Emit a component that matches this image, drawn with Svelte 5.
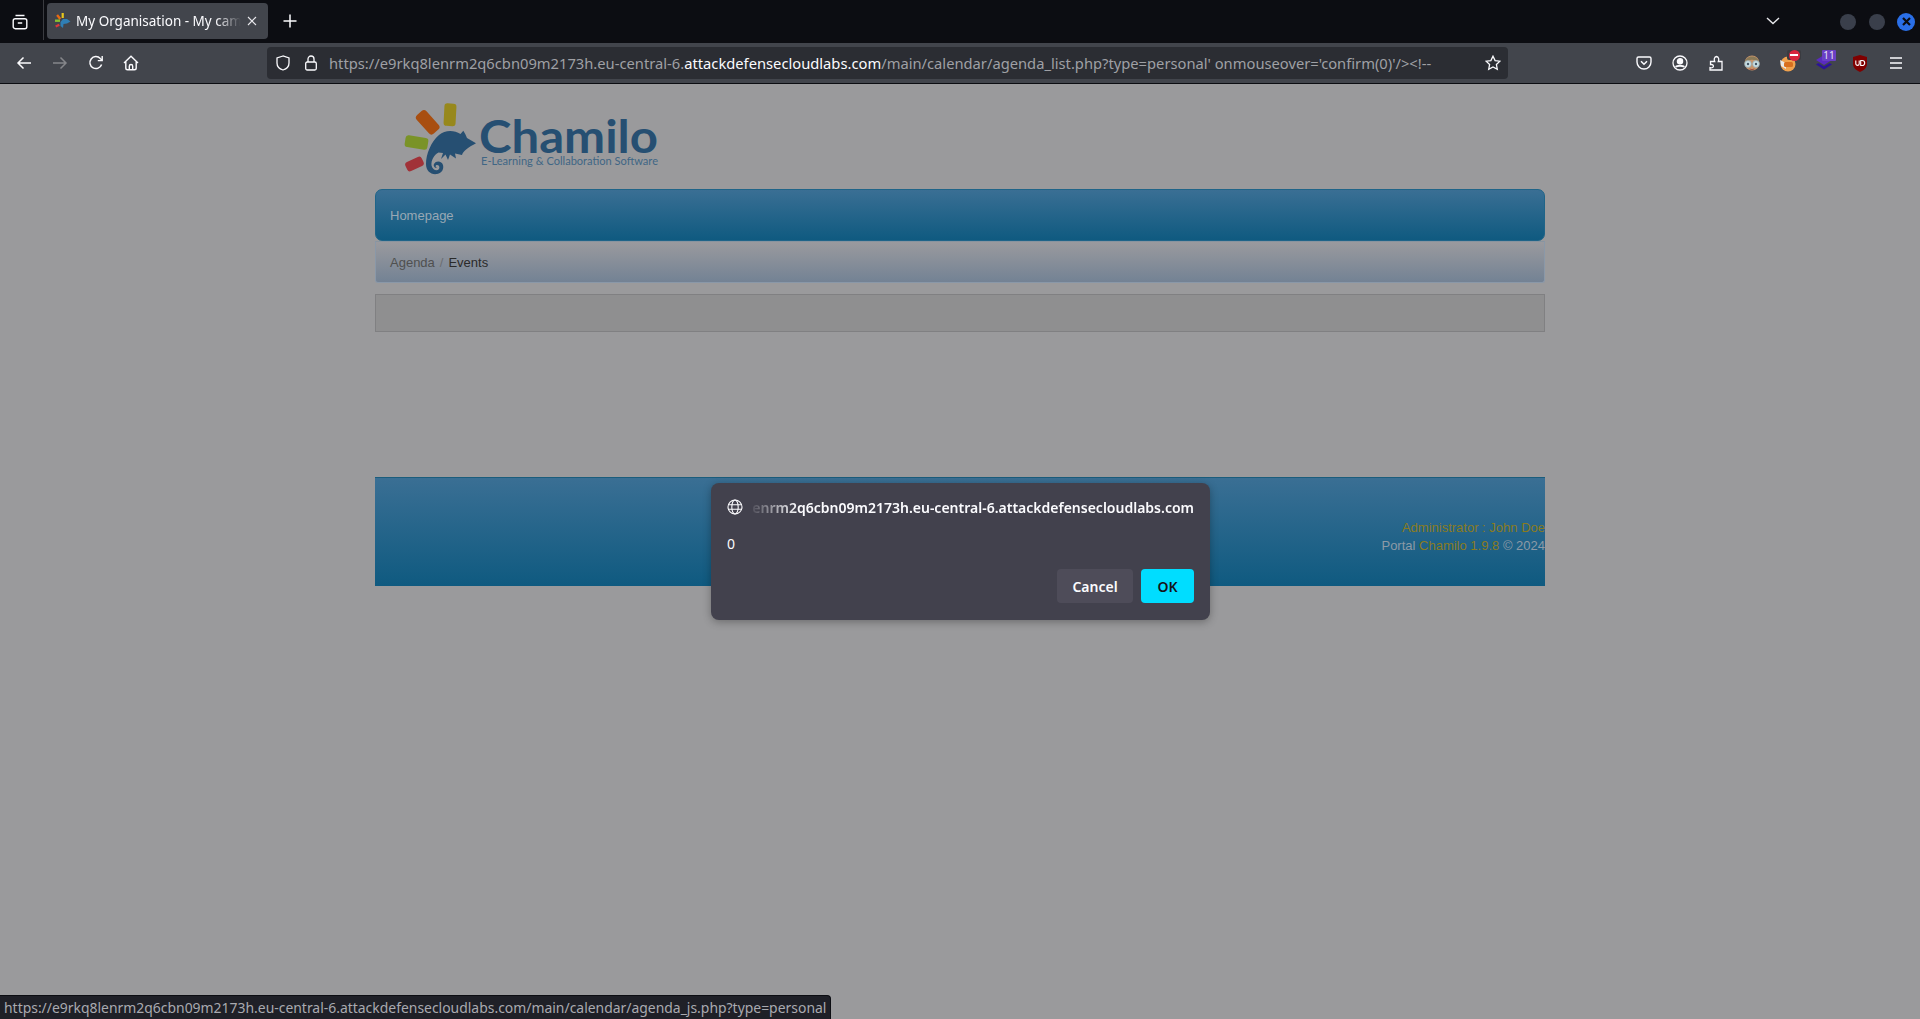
<script>
  const url1 = "https://e9rkq8lenrm2q6cbn09m2173h.eu-central-6.";
  const url2 = "attackdefensecloudlabs.com";
  const url3 = "/main/calendar/agenda_list.php?type=personal' onmouseover='confirm(0)'/><!--";
</script>

<div class="window">
  <header class="tabstrip">
    <div class="tabs-btn">
      <svg width="16" height="16" viewBox="0 0 16 16" fill="none" stroke="#fbfbfe" stroke-width="1.4"><rect x="1.2" y="4.7" width="13.6" height="10" rx="2"/><path d="M3.5 1.5h9M5.8 9h4.4"/></svg>
    </div>
    <div class="divider"></div>
    <div class="tab">
      <svg class="favicon" width="16" height="16" viewBox="0 0 16 16"><rect x="6.6" y="0" width="2.2" height="5" fill="#e8c81c"/><rect x="2.5" y="1.5" width="2.4" height="5" transform="rotate(-40 3.7 4)" fill="#ea6a10"/><rect x="0" y="6.5" width="5" height="2.4" fill="#88c030"/><rect x="0.5" y="11.5" width="4" height="2.2" transform="rotate(-25 2.5 12.6)" fill="#dd3a3a"/><path d="M15.5 8.5 12 6 8 6 5.5 9 5.5 13 8 15 8.5 11 12 10.5z" fill="#2f7fb5"/></svg>
      <span class="tab-title">My Organisation - My campus</span>
      <svg class="tab-close" width="10" height="10" viewBox="0 0 10 10" stroke="#e8e8ec" stroke-width="1.1"><path d="M1 1l8 8M9 1l-8 8"/></svg>
    </div>
    <svg class="plus" width="14" height="14" viewBox="0 0 14 14" stroke="#fbfbfe" stroke-width="1.5"><path d="M7 .5v13M.5 7h13"/></svg>
    <div class="strip-space"></div>
    <svg class="chev" width="14" height="8" viewBox="0 0 14 8" fill="none" stroke="#e8e8ec" stroke-width="1.4"><path d="M1 1l6 5.5L13 1"/></svg>
    <div class="wbtns">
      <span class="wbtn"></span>
      <span class="wbtn"></span>
      <span class="wbtn close"><svg width="9" height="9" viewBox="0 0 9 9" stroke="#0c0d12" stroke-width="2.2"><path d="M1 1l7 7M8 1l-7 7"/></svg></span>
    </div>
  </header>

  <nav class="toolbar">
    <div class="tb-group">
      <span class="tb"><svg width="16" height="16" viewBox="0 0 16 16" fill="none" stroke="#fbfbfe" stroke-width="1.5"><path d="M15 8H2M7.5 2.5 2 8l5.5 5.5"/></svg></span>
      <span class="tb"><svg width="16" height="16" viewBox="0 0 16 16" fill="none" stroke="#85868a" stroke-width="1.5"><path d="M1 8h13M8.5 2.5 14 8l-5.5 5.5"/></svg></span>
      <span class="tb"><svg width="16" height="16" viewBox="0 0 16 16" fill="none" stroke="#fbfbfe" stroke-width="1.5"><path d="M13.6 9.5A6 6 0 1 1 12.3 3.5L14 5.2"/><path d="M14.2 1v4.6H9.8" stroke-width="1.4"/></svg></span>
      <span class="tb home"><svg width="16" height="16" viewBox="0 0 16 16" fill="none" stroke="#fbfbfe" stroke-width="1.4"><path d="M1 8 8 1.2 15 8M2.8 6.5V13a1.8 1.8 0 0 0 1.8 1.8h6.8a1.8 1.8 0 0 0 1.8-1.8V6.5"/><path d="M6.3 14.8v-3.6a1.7 1.7 0 0 1 3.4 0v3.6"/></svg></span>
    </div>
    <div class="urlbar">
      <svg class="shield" width="16" height="16" viewBox="0 0 16 16" fill="none" stroke="#fbfbfe" stroke-width="1.3"><path d="M8 1 2 3v5c0 3.4 2.6 6 6 7 3.4-1 6-3.600 6-7V3z"/></svg>
      <svg class="lock" width="14" height="16" viewBox="0 0 14 16" fill="none" stroke="#fbfbfe" stroke-width="1.3"><rect x="1.700" y="7" width="10.600" height="8" rx="1.500"/><path d="M4 7V4a3 3 0 0 1 6 0v3"/></svg>
      <span class="url"><span class="dim">{url1}</span><span class="bright">{url2}</span><span class="dim">{url3}</span></span>
      <svg class="star" width="16" height="16" viewBox="0 0 16 16" fill="none" stroke="#fbfbfe" stroke-width="1.300"><path d="M8 1.200l2.100 4.400 4.800.6-3.500 3.300.9 4.800L8 12l-4.300 2.300.9-4.800L1.100 6.200l4.800-.6z"/></svg>
    </div>
    <div class="tb-group right">
      <span class="tb"><svg width="16" height="16" viewBox="0 0 16 16" fill="none" stroke="#fbfbfe" stroke-width="1.400"><path d="M2.500 2h11A1.500 1.500 0 0 1 15 3.500V7a7 7 0 0 1-14 0V3.500A1.500 1.500 0 0 1 2.500 2z"/><path d="M5 6.300 8 9.200l3-2.900" stroke-width="1.500"/></svg></span>
      <span class="tb"><svg width="16" height="16" viewBox="0 0 16 16" fill="none" stroke="#fbfbfe" stroke-width="1.300"><circle cx="8" cy="8" r="7"/><circle cx="8" cy="6.300" r="2.600" fill="#fbfbfe"/><path d="M3.800 12c1-1.700 7.400-1.700 8.400 0" stroke-width="1.800"/></svg></span>
      <span class="tb"><svg width="16" height="16" viewBox="0 0 16 16" fill="none" stroke="#fbfbfe" stroke-width="1.300"><path d="M2 15h12V6.500h-3.700c.9-2 .5-4.800-1.800-5-2.300.2-2.700 3-1.800 5H2.500v3.200c2-.6 2.900.5 2.900 1.500s-1 2-3.400 1.400z"/></svg></span>
      <span class="tb"><svg width="18" height="18" viewBox="0 0 18 18"><circle cx="9" cy="9" r="7.500" fill="#c8946a"/><path d="M2 8C3 .5 15 .5 16 8 13 5 5 5 2 8z" fill="#8a7a58"/><circle cx="5" cy="10" r="3.400" fill="#c8dfe4" stroke="#8fa0a8" stroke-width=".7"/><circle cx="13" cy="10" r="3.400" fill="#c8dfe4" stroke="#8fa0a8" stroke-width=".7"/><circle cx="5" cy="10" r="1.200" fill="#456"/><circle cx="13" cy="10" r="1.200" fill="#456"/><path d="M6.500 15q2.500 1.200 5 0" stroke="#a04f3f" fill="none"/></svg></span>
      <span class="tb">
        <svg width="18" height="18" viewBox="0 0 18 18"><circle cx="9" cy="10" r="7.500" fill="#f0a24e"/><path d="M1 6l6 3v6l-5-3z" fill="#e8e8e8"/><rect x="5" y="8" width="9" height="5" rx="1.500" fill="#d9701f"/></svg>
        <span class="block-badge"><span class="block-dot"><span class="block-bar"></span></span></span>
      </span>
      <span class="tb">
        <svg width="18" height="16" viewBox="0 0 18 16"><path d="M9 0l8 5-8 5-8-5z" fill="#5a2bc0"/><path d="M1 9.500 9 14.500l8-5-2.400-1.500L9 11.500 3.400 8z" fill="#2b139a"/></svg>
        <span class="count">11</span>
      </span>
      <span class="tb"><svg width="16" height="17" viewBox="0 0 16 17"><path d="M8 0 1 2v7c0 3.600 3 6.300 7 8 4-1.700 7-4.400 7-8V2z" fill="#800000"/><path d="M3.800 5.500v3.200a1.700 1.700 0 0 0 3.400 0V5.500M8.700 5.500v5h1.500a2.500 2.500 0 0 0 0-5z" fill="none" stroke="#fff" stroke-width="1.100"/></svg></span>
      <span class="tb"><svg width="14" height="12" viewBox="0 0 14 12" stroke="#fbfbfe" stroke-width="1.500"><path d="M1 1h12M1 6h12M1 11h12" /></svg></span>
    </div>
  </nav>

  <main class="page">
    <div class="container">
      <div class="logo">
        <svg width="270" height="80" viewBox="0 0 270 80">
          <rect x="21.200" y="9.800" width="13" height="25" rx="3.500" transform="rotate(-42 27.700 22.300)" fill="#a84e10"/>
          <rect x="44" y="3.500" width="12" height="22.500" rx="3" transform="rotate(3 50 15)" fill="#97881c"/>
          <rect x="5" y="36.500" width="23" height="12" rx="3" transform="rotate(9 16.500 42.500)" fill="#7a9327"/>
          <rect x="5.500" y="59" width="18" height="10" rx="3" transform="rotate(-25 14.500 64)" fill="#a13238"/>
          <path d="M76 43.300 67 38Q65 33 63.300 30.700L60.500 34C54 30 45 30 39 35 31 42 26 54 26 64 26 71 31 75 37 74 42 73 44 69 43 65 42 61 36 60 34 64 33 66 35 68.500 37 67.500 35 67 35.500 65 37 65 39 65 40 67 39 69 37 71.500 32.500 70 31.500 65.500 31 60 34 55 38.500 52.500L43 53 41 59 45.500 54.500 48 60 50 54.500 56 58.500 55 53.500 62 55C63 51 69 47 76 43.300z" fill="#264f72"/>
          <text x="79" y="52.500" class="logo-name" textLength="179" lengthAdjust="spacingAndGlyphs">Chamilo</text>
          <text x="81" y="64.500" class="logo-sub" textLength="177" lengthAdjust="spacingAndGlyphs">E-Learning &amp; Collaboration Software</text>
        </svg>
      </div>
      <div class="mainnav"><span>Homepage</span></div>
      <div class="crumbs"><span class="c-link">Agenda</span><span class="c-sep">/</span><span class="c-cur">Events</span></div>
      <div class="emptybox"></div>
      <footer class="foot">
        <div class="foot-text">
          <div class="olive">Administrator : John Doe</div>
          <div>Portal <span class="olive">Chamilo 1.9.8</span> © 2024</div>
        </div>
      </footer>
    </div>
  </main>

  <div class="dialog">
    <div class="d-head">
      <svg width="16" height="16" viewBox="0 0 16 16" fill="none" stroke="#fbfbfe" stroke-width="1.100"><circle cx="8" cy="8" r="7"/><ellipse cx="8" cy="8" rx="3.200" ry="7"/><path d="M1.300 5.700h13.400M1.300 10.300h13.400"/></svg>
      <div class="d-host"><span>enrm2q6cbn09m2173h.eu-central-6.attackdefensecloudlabs.com</span></div>
    </div>
    <div class="d-msg">0</div>
    <div class="d-btns">
      <span class="btn cancel">Cancel</span>
      <span class="btn ok">OK</span>
    </div>
  </div>

  <div class="status">https://e9rkq8lenrm2q6cbn09m2173h.eu-central-6.attackdefensecloudlabs.com/main/calendar/agenda_js.php?type=personal</div>
</div>

<style>
  :global(body) { margin: 0; background: #9a9a9c; }
  .window { position: relative; width: 1920px; height: 1019px; overflow: hidden; display: flex; flex-direction: column; font-family: "Noto Sans", sans-serif; }

  .tabstrip { height: 43px; background: #0c0d12; display: flex; align-items: center; flex: none; }
  .tabs-btn { width: 43px; height: 43px; display: flex; align-items: center; justify-content: center; box-sizing: border-box; padding-right: 4px; }
  .divider { width: 1px; height: 40px; margin-top: -3px; background: #3a3b40; }
  .tab { width: 221px; height: 36px; margin-left: 3px; margin-top: -2px; background: #42454c; border-radius: 4px; display: flex; align-items: center; position: relative; box-sizing: border-box; padding-left: 8px; }
  .favicon { flex: none; }
  .tab-title { margin-left: 5px; width: 165px; overflow: hidden; white-space: nowrap; font-size: 13.500px; color: #fbfbfe; -webkit-mask-image: linear-gradient(to right, #000 85%, transparent 100%); mask-image: linear-gradient(to right, #000 85%, transparent 100%); }
  .tab-close { margin-left: 6px; flex: none; }
  .plus { margin-left: 15px; margin-top: -1px; }
  .strip-space { flex: 1; }
  .chev { margin-right: 60px; margin-top: -2px; }
  .wbtns { display: flex; gap: 13px; margin-right: 6px; }
  .wbtn { width: 16px; height: 16px; border-radius: 50%; background: #3a3f4b; display: flex; align-items: center; justify-content: center; }
  .wbtn.close { background: #2a6fe8; width: 18px; height: 18px; margin: -1px -1px -1px -1px; }

  .toolbar { height: 40px; background: #42454c; border-bottom: 1px solid #0c0d12; display: flex; align-items: center; padding: 0 6px; flex: none; }
  .tb-group { display: flex; }
  .tb { width: 36px; height: 36px; display: flex; align-items: center; justify-content: center; position: relative; }
  .home { margin-left: -1px; margin-right: 1px; }
  .urlbar { width: 1241px; height: 32px; margin-left: 117px; margin-right: 118px; background: #2b2d33; border-radius: 4px; display: flex; align-items: center; box-sizing: border-box; padding-left: 8px; padding-right: 7px; flex: none; }
  .shield { flex: none; }
  .lock { flex: none; margin-left: 13px; }
  .url { margin-left: 11px; font-size: 14.730px; white-space: nowrap; overflow: hidden; flex: 1; }
  .dim { color: #9fa0a5; }
  .bright { color: #fbfbfe; }
  .star { flex: none; }
  .block-badge { position: absolute; top: 5px; left: 17px; width: 14px; height: 10px; background: #3a3b40; border-radius: 2px; display: flex; align-items: center; justify-content: center; }
  .block-dot { width: 11px; height: 11px; border-radius: 50%; background: #d7263d; display: flex; align-items: center; justify-content: center; flex: none; }
  .block-bar { width: 8px; height: 2.500px; background: #fff; }
  .count { position: absolute; top: 5px; left: 16px; height: 11px; width: 14px; background: #6a3fc4; border-radius: 1px; color: #e8e4f4; font-size: 10px; line-height: 11px; text-align: center; }

  .page { flex: 1; background: #9a9a9c; font-family: "Liberation Sans", sans-serif; }
  .container { width: 1170px; margin: 0 auto; }
  .logo { height: 105px; box-sizing: border-box; padding: 16px 0 0 25px; }
  .logo svg { display: block; }
  .logo-name { font-family: "Lato", sans-serif; font-size: 46px; font-weight: 700; fill: #264f72; }
  .logo-sub { font-family: "Lato", sans-serif; font-size: 11.500px; fill: #3f6685; }
  .mainnav { height: 52px; box-sizing: border-box; border: 1px solid #1f6488; border-radius: 7px; background: linear-gradient(#3a6f94, #0f5a80); display: flex; align-items: center; padding-left: 14px; font-size: 13px; color: #98a8b4; }
  .crumbs { height: 42px; box-sizing: border-box; border: 1px solid #8a98a8; border-top: 1px solid #88949f; border-radius: 0 0 3px 3px; background: linear-gradient(#9a9a9e, #738294); display: flex; align-items: center; padding-left: 14px; font-size: 13px; }
  .c-link { color: #4f5050; }
  .c-sep { color: #6c6e72; margin: 0 5px; }
  .c-cur { color: #2a2a2a; }
  .emptybox { height: 38px; margin-top: 11px; box-sizing: border-box; border: 1px solid #808082; background: #8f8f90; }
  .foot { height: 109px; margin-top: 145px; border-top: 1px solid #1b5d7c; box-sizing: border-box; background: linear-gradient(#3a6f94, #0f5a80); display: flex; justify-content: flex-end; font-size: 13px; color: #8c9aa6; }
  .foot-text { margin-top: 41px; line-height: 18px; text-align: right; }
  .olive { color: #8a7b1f; }

  .dialog { position: absolute; left: 711px; top: 483px; width: 499px; height: 137px; box-sizing: border-box; padding: 16px; background: #42414d; border-radius: 8px; box-shadow: 0 2px 8px rgba(0,0,0,.3); display: flex; flex-direction: column; color: #fbfbfe; }
  .d-head { display: flex; align-items: center; height: 16px; }
  .d-host { margin-left: 5px; flex: 1; min-width: 0; display: flex; justify-content: flex-end; overflow: hidden; white-space: nowrap; font-size: 14px; font-weight: 600; -webkit-mask-image: linear-gradient(to right, transparent 0, #000 50px); mask-image: linear-gradient(to right, transparent 0, #000 50px); }
  .d-msg { margin-top: 19px; font-size: 14px; line-height: 20px; }
  .d-btns { margin-top: 15px; display: flex; justify-content: flex-end; gap: 8px; }
  .btn { height: 34px; border-radius: 4px; display: flex; align-items: center; justify-content: center; font-size: 14px; font-weight: 600; }
  .cancel { width: 76px; background: #4e4c59; color: #fbfbfe; }
  .ok { width: 53px; background: #00ddff; color: #15141a; }

  .status { position: absolute; left: 0; bottom: 0; width: 831px; height: 24px; box-sizing: border-box; background: #1f2027; border: 1px solid #0c0d12; border-width: 1px 1px 0 0; border-radius: 0 4px 0 0; color: #a9aab0; font-size: 13.930px; line-height: 24px; padding-left: 4px; white-space: nowrap; overflow: hidden; }
</style>
